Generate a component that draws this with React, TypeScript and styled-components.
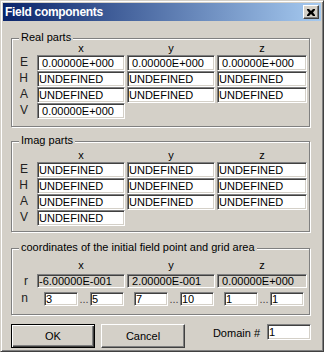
import React from "react";
import { styled, createGlobalStyle } from "styled-components";

const FACE = "#d4d0c8";

const GlobalStyle = createGlobalStyle`
  html, body {
    margin: 0;
    padding: 0;
    background: ${FACE};
  }
  body {
    font-family: "Liberation Sans", Arial, sans-serif;
    font-size: 11px;
    color: #000;
  }
`;

const ZERO = " 0.00000E+000";
const UNDEF = "UNDEFINED";

const realRows = [
  { label: "E", values: [ZERO, ZERO, ZERO] },
  { label: "H", values: [UNDEF, UNDEF, UNDEF] },
  { label: "A", values: [UNDEF, UNDEF, UNDEF] },
  { label: "V", values: [ZERO] },
];

const imagRows = [
  { label: "E", values: [UNDEF, UNDEF, UNDEF] },
  { label: "H", values: [UNDEF, UNDEF, UNDEF] },
  { label: "A", values: [UNDEF, UNDEF, UNDEF] },
  { label: "V", values: [UNDEF] },
];

const origin = ["-6.00000E-001", " 2.00000E-001", ZERO];
const ranges = [
  ["3", "5"],
  ["7", "10"],
  ["1", "1"],
];

const App = () => {
  return (
    <>
      <GlobalStyle />
      <Window>
        <TitleBar>
          <Title>Field components</Title>
          <CloseButton aria-label="close">
            <svg width="8" height="7" viewBox="0 0 8 7">
              <path
                d="M0 0h2l2 2 2-2h2v1L6 3.5 8 6v1H6L4 5 2 7H0V6l2-2.5L0 1z"
                fill="#000"
              />
            </svg>
          </CloseButton>
        </TitleBar>
        <Body>
          <Group $top={4} $bottom={7}>
            <Legend>Real parts</Legend>
            <FieldGrid>
              <span />
              <ColHead>x</ColHead>
              <ColHead>y</ColHead>
              <ColHead>z</ColHead>
              {realRows.map((row) => (
                <React.Fragment key={row.label}>
                  <RowLabel>{row.label}</RowLabel>
                  {row.values.map((v, i) => (
                    <Field key={i}>{v}</Field>
                  ))}
                  {row.values.length === 1 && <span style={{ gridColumn: "span 2" }} />}
                </React.Fragment>
              ))}
            </FieldGrid>
          </Group>

          <Group $gapTop={14} $top={8} $bottom={5}>
            <Legend>Imag parts</Legend>
            <FieldGrid>
              <span />
              <ColHead>x</ColHead>
              <ColHead>y</ColHead>
              <ColHead>z</ColHead>
              {imagRows.map((row) => (
                <React.Fragment key={row.label}>
                  <RowLabel>{row.label}</RowLabel>
                  {row.values.map((v, i) => (
                    <Field key={i}>{v}</Field>
                  ))}
                  {row.values.length === 1 && <span style={{ gridColumn: "span 2" }} />}
                </React.Fragment>
              ))}
            </FieldGrid>
          </Group>

          <Group $gapTop={16} $top={11} $bottom={8}>
            <Legend>coordinates of the initial field point and grid area</Legend>
            <FieldGrid $rowGap={2}>
              <span />
              <ColHead>x</ColHead>
              <ColHead>y</ColHead>
              <ColHead>z</ColHead>
              <RowLabel>r</RowLabel>
              {origin.map((v, i) => (
                <Field key={i} $readOnly $h={14}>
                  {v}
                </Field>
              ))}
              <RowLabel>n</RowLabel>
              {ranges.map(([from, to], i) => (
                <Range key={i}>
                  <Field $h={14} $w={34}>
                    {from}
                  </Field>
                  <Dots>...</Dots>
                  <Field $h={14} $w={34}>
                    {to}
                  </Field>
                </Range>
              ))}
            </FieldGrid>
          </Group>

          <Footer>
            <Button $default>OK</Button>
            <Button>Cancel</Button>
            <DomainLabel>Domain #</DomainLabel>
            <Field $w={44}>1</Field>
          </Footer>
        </Body>
      </Window>
    </>
  );
};

const Window = styled.div`
  box-sizing: border-box;
  width: 324px;
  height: 352px;
  padding: 2px;
  background: ${FACE};
  border: 1px solid;
  border-color: ${FACE} #404040 #404040 ${FACE};
  box-shadow: inset 1px 1px #fff, inset -1px -1px #808080;
  display: flex;
  flex-direction: column;
`;

const TitleBar = styled.div`
  height: 18px;
  flex-shrink: 0;
  display: flex;
  align-items: center;
  justify-content: space-between;
  padding: 0 2px 0 2px;
  background: linear-gradient(to right, #0a246a, #a6caf0);
`;

const Title = styled.span`
  color: #fff;
  font-weight: 700;
  font-size: 12px;
  letter-spacing: -0.3px;
  line-height: 18px;
`;

const CloseButton = styled.div`
  box-sizing: border-box;
  width: 16px;
  height: 14px;
  display: flex;
  align-items: center;
  justify-content: center;
  background: ${FACE};
  border: 1px solid;
  border-color: #fff #404040 #404040 #fff;
  box-shadow: inset -1px -1px #808080;
`;

const Body = styled.div`
  display: flex;
  flex-direction: column;
  padding: 17px 10px 0 8px;
`;

const Group = styled.div<{ $gapTop?: number; $top: number; $bottom: number }>`
  position: relative;
  width: 299px;
  box-sizing: border-box;
  margin-top: ${(p) => p.$gapTop ?? 0}px;
  padding: ${(p) => p.$top}px 0 ${(p) => p.$bottom}px 0;
  border: 1px solid #808080;
  box-shadow: inset 1px 1px #fff, 1px 1px #fff;
`;

const Legend = styled.span`
  position: absolute;
  top: -8px;
  left: 7px;
  padding: 0 2px;
  line-height: 13px;
  background: ${FACE};
  white-space: nowrap;
`;

const FieldGrid = styled.div<{ $rowGap?: number }>`
  display: grid;
  grid-template-columns: 23px 88px 88px 90px;
  column-gap: 2px;
  row-gap: ${(p) => p.$rowGap ?? 0}px;
  grid-template-rows: 12px;
`;

const ColHead = styled.span`
  height: 12px;
  line-height: 10px;
  text-align: center;
`;

const RowLabel = styled.span`
  text-align: right;
  padding-right: 7px;
  font-size: 12px;
  line-height: 15px;
  color: #222;
`;

const Field = styled.div<{ $readOnly?: boolean; $h?: number; $w?: number }>`
  box-sizing: border-box;
  height: ${(p) => p.$h ?? 16}px;
  width: ${(p) => (p.$w ? `${p.$w}px` : "auto")};
  flex-shrink: 0;
  padding: 0 0 0 1px;
  border: 1px solid;
  border-color: #808080 #fff #fff #808080;
  box-shadow: inset 1px 1px #404040, inset -1px -1px ${FACE};
  background: ${(p) => (p.$readOnly ? FACE : "#fff")};
  line-height: ${(p) => (p.$h ?? 16) - 3}px;
  padding-top: 1px;
  white-space: pre;
  overflow: hidden;
`;

const Range = styled.div`
  display: flex;
  align-items: center;
  padding-left: 7px;
`;

const Dots = styled.span`
  width: 12px;
  text-align: center;
  line-height: 12px;
  color: #444;
`;

const Footer = styled.div`
  display: flex;
  align-items: flex-start;
  gap: 6px;
  margin-top: 9px;
`;

const Button = styled.div<{ $default?: boolean }>`
  box-sizing: border-box;
  width: 84px;
  height: 24px;
  display: flex;
  align-items: center;
  justify-content: center;
  background: ${FACE};
  border: 1px solid;
  border-color: ${(p) => (p.$default ? "#000" : "#fff #404040 #404040 #fff")};
  box-shadow: ${(p) =>
    p.$default
      ? "inset 1px 1px #fff, inset -1px -1px #404040, inset -2px -2px #808080"
      : "inset -1px -1px #808080"};
`;

const DomainLabel = styled.span`
  margin-left: auto;
  margin-right: 1px;
  line-height: 16px;
  padding-top: 1px;
`;

export default App;
